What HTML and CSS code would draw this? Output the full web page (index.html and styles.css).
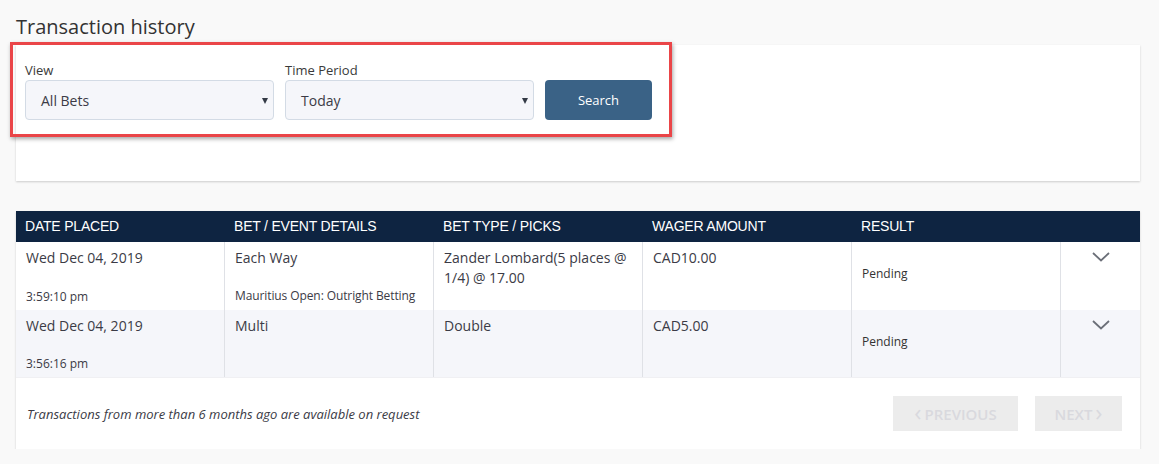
FILE: index.html
```html
<!DOCTYPE html>
<html>
<head>
<meta charset="utf-8">
<link rel="stylesheet" href="styles.css">
</head>
<body>
<div class="page">
  <h1 class="title">Transaction history</h1>
  <div class="filter-card">
    <div class="filters">
      <div class="field">
        <label class="label">View</label>
        <div class="select"><span>All Bets</span><span class="caret"></span></div>
      </div>
      <div class="field">
        <label class="label">Time Period</label>
        <div class="select"><span>Today</span><span class="caret"></span></div>
      </div>
      <button class="search">Search</button>
    </div>
    <div class="highlight"></div>
  </div>

  <div class="table-card">
    <div class="thead">
      <div class="th">DATE PLACED</div>
      <div class="th">BET / EVENT DETAILS</div>
      <div class="th">BET TYPE / PICKS</div>
      <div class="th">WAGER AMOUNT</div>
      <div class="th">RESULT</div>
      <div class="th"></div>
    </div>
    <div class="row r1">
      <div class="td date"><span class="main">Wed Dec 04, 2019</span><span class="sub">3:59:10 pm</span></div>
      <div class="td event"><span class="main">Each Way</span><span class="sub">Mauritius Open: Outright Betting</span></div>
      <div class="td"><span class="main">Zander Lombard(5 places @ 1/4) @ 17.00</span></div>
      <div class="td"><span class="main">CAD10.00</span></div>
      <div class="td"><span class="result">Pending</span></div>
      <div class="td toggle"><svg width="18" height="10" viewBox="0 0 18 10"><path d="M1 1 L9 8.5 L17 1" fill="none" stroke="#6b6f78" stroke-width="1.8"/></svg></div>
    </div>
    <div class="row r2">
      <div class="td date"><span class="main">Wed Dec 04, 2019</span><span class="sub">3:56:16 pm</span></div>
      <div class="td event"><span class="main">Multi</span></div>
      <div class="td"><span class="main">Double</span></div>
      <div class="td"><span class="main">CAD5.00</span></div>
      <div class="td"><span class="result">Pending</span></div>
      <div class="td toggle"><svg width="18" height="10" viewBox="0 0 18 10"><path d="M1 1 L9 8.5 L17 1" fill="none" stroke="#6b6f78" stroke-width="1.8"/></svg></div>
    </div>
    <div class="tfoot">
      <p class="note">Transactions from more than 6 months ago are available on request</p>
      <div class="pager">
        <button class="pg prev"><span class="chev">&#8249;</span>PREVIOUS</button>
        <button class="pg next">NEXT<span class="chev">&#8250;</span></button>
      </div>
    </div>
  </div>
</div>
</body>
</html>
```
FILE: styles.css
```css
* { box-sizing: border-box; }
html, body { margin: 0; padding: 0; }
body {
  background: #f9f9f9;
  font-family: "Open Sans", "Liberation Sans", sans-serif;
  color: #333;
}
.page {
  padding: 14px 19px 0 16px;
}
.title {
  margin: 0;
  font-size: 20px;
  line-height: 26px;
  font-weight: 400;
  color: #333;
}
.filter-card {
  position: relative;
  margin-top: 5px;
  height: 136px;
  background: #fff;
  box-shadow: 0 1px 2px rgba(0,0,0,0.18);
  padding: 16px 9px 0 9px;
}
.filters {
  display: flex;
  align-items: flex-end;
  gap: 11px;
}
.field {
  display: flex;
  flex-direction: column;
  width: 249px;
}
.label {
  font-size: 13px;
  line-height: 18px;
  color: #3a3a3a;
  margin-bottom: 1px;
}
.select {
  position: relative;
  height: 40px;
  background: #f5f6fa;
  border: 1px solid #d3dbe5;
  border-radius: 4px;
  display: flex;
  align-items: center;
  padding-left: 15px;
  font-size: 14px;
  color: #3b3b46;
}
.caret {
  position: absolute;
  right: 5px;
  top: 17px;
  width: 0;
  height: 0;
  border-left: 3.5px solid transparent;
  border-right: 3.5px solid transparent;
  border-top: 6px solid #333a45;
}
.search {
  width: 107px;
  height: 40px;
  background: #3a6286;
  color: #fff;
  border: none;
  border-radius: 4px;
  font-family: "Open Sans", "Liberation Sans", sans-serif;
  font-size: 13px;
  margin-left: 0;
}
.highlight {
  position: absolute;
  left: -6px;
  top: -3px;
  width: 662px;
  height: 95px;
  border: 3px solid #ea4548;
  box-shadow: 1px 2px 4px rgba(0,0,0,0.35);
  pointer-events: none;
}
.table-card {
  margin-top: 30px;
  background: #fff;
  box-shadow: 0 1px 2px rgba(0,0,0,0.18);
}
.thead, .row {
  display: grid;
  grid-template-columns: 209px 209px 209px 209px 209px 1fr;
}
.thead {
  background: #0e2441;
  height: 31px;
}
.th {
  font-family: "Liberation Sans", Arial, sans-serif;
  color: #fff;
  font-size: 14px;
  line-height: 31px;
  padding-left: 9px;
  letter-spacing: -0.2px;
}
.row.r1 { height: 68px; background: #fff; }
.row.r2 { height: 67px; background: #f5f6fa; }
.td {
  border-right: 1px solid #dfe1e6;
  padding: 6px 10px 6px 10px;
  display: flex;
  flex-direction: column;
}
.td:last-child { border-right: none; }
.td.date { justify-content: space-between; padding-bottom: 5px; }
.td.event { justify-content: space-between; padding-bottom: 6px; }
.main {
  font-size: 14px;
  line-height: 20px;
  color: #3b3b46;
}
.sub {
  font-size: 12px;
  line-height: 16px;
  color: #3b3b46;
}
.event .sub { letter-spacing: -0.1px; }
.result {
  margin-top: 18px;
  font-size: 12px;
  line-height: 16px;
  color: #333;
}
.toggle {
  align-items: center;
  padding-top: 10px;
}
.tfoot {
  height: 72px;
  display: flex;
  justify-content: space-between;
  align-items: center;
  padding: 0 18px 0 11px;
  border-top: 1px solid #f0f0f3;
}
.note {
  margin: 0;
  font-size: 13px;
  font-style: italic;
  color: #3b3b46;
}
.pager {
  display: flex;
  gap: 17px;
}
.pg {
  height: 35px;
  background: #ececec;
  border: none;
  color: #d9d9de;
  font-family: "Open Sans", "Liberation Sans", sans-serif;
  font-size: 15px;
  font-weight: 600;
  display: flex;
  align-items: center;
  justify-content: center;
  gap: 3px;
}
.prev { width: 125px; }
.next { width: 87px; }
.chev {
  font-size: 24px;
  line-height: 20px;
  font-weight: 400;
  margin-top: -3px;
}
```
